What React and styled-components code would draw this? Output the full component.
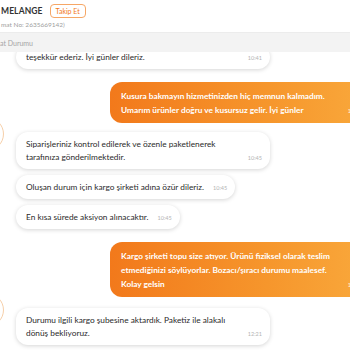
import React from "react";
import styled, { createGlobalStyle } from "styled-components";

const GlobalStyle = createGlobalStyle`
  html, body { margin: 0; padding: 0; background: #fff; }
  body { font-family: Lato, "Liberation Sans", sans-serif; }
`;

const Frame = styled.div`
  width: 350px;
  height: 350px;
  overflow: hidden;
  background: #fff;
  display: flex;
  flex-direction: column;
`;

const Header = styled.header`
  height: 33px;
  flex: none;
  box-sizing: border-box;
  border-bottom: 1px solid #ececec;
  display: flex;
  flex-direction: column;
  justify-content: center;
  gap: 3px;
  padding-left: 1px;
`;

const TitleRow = styled.div`
  display: flex;
  align-items: center;
  gap: 7px;
`;

const StoreName = styled.span`
  font-size: 8.5px;
  font-weight: 700;
  color: #333;
  letter-spacing: 0.1px;
`;

const FollowBadge = styled.span`
  box-sizing: border-box;
  height: 14px;
  padding: 0 5px;
  border: 1px solid #f6a766;
  border-radius: 4px;
  color: #f27a1a;
  font-size: 7px;
  display: inline-flex;
  align-items: center;
`;

const OrderNo = styled.div`
  font-size: 6.5px;
  color: #a0a0a0;
`;

const StatusBar = styled.div`
  height: 19px;
  flex: none;
  background: #f3f3f3;
  color: #a5a5a5;
  font-size: 7px;
  display: flex;
  align-items: center;
`;

const Messages = styled.div`
  flex: 1;
  overflow: hidden;
`;

const List = styled.div`
  margin-left: -30px;
  width: 402px;
  display: flex;
  flex-direction: column;
`;

const Group = styled.div`
  display: flex;
  align-items: flex-start;
  gap: 12px;
  margin-top: ${(p) => p.$mt || 0}px;
  padding-left: ${(p) => (p.$noAvatar ? 46 : 0)}px;
`;

const Avatar = styled.div`
  flex: none;
  width: 34px;
  height: 34px;
  box-sizing: border-box;
  margin-top: -15px;
  border-radius: 50%;
  border: 1px solid #f6cfa9;
  background: #fff;
`;

const Stack = styled.div`
  display: flex;
  flex-direction: column;
  align-items: flex-start;
  gap: 6px;
`;

const OutRow = styled.div`
  display: flex;
  justify-content: flex-end;
  margin-top: ${(p) => p.$mt || 0}px;
`;

const Bubble = styled.div`
  box-sizing: border-box;
  display: flex;
  align-items: flex-end;
  justify-content: space-between;
  gap: 9px;
  width: ${(p) => (p.$width ? `${p.$width}px` : "auto")};
  padding: 6px 8px 5px 10px;
  border-radius: 12px;
  background: #fff;
  box-shadow: 0 1px 4px rgba(0, 0, 0, 0.17);
`;

const OutBubble = styled.div`
  box-sizing: border-box;
  display: flex;
  align-items: flex-end;
  justify-content: space-between;
  width: 262px;
  padding: 7px 10px 6px 11px;
  border-radius: 12px;
  background: linear-gradient(90deg, #f2791b 0%, #f6962c 60%, #f9a93c 100%);
`;

const Text = styled.div`
  font-size: 8.3px;
  line-height: 13px;
  color: #2b2b2b;
  white-space: nowrap;
`;

const OutText = styled.div`
  font-size: 8.3px;
  line-height: 14px;
  font-weight: 700;
  color: #fff;
  white-space: nowrap;
`;

const Time = styled.span`
  flex: none;
  font-size: 5.5px;
  line-height: 12px;
  color: #b3b3b3;
`;

const OutTime = styled.span`
  flex: none;
  font-size: 5.5px;
  line-height: 12px;
  color: rgba(255, 255, 255, 0.85);
`;

const Lines = ({ lines, as: Comp }) => (
  <Comp>
    {lines.map((l, i) => (
      <React.Fragment key={i}>
        {i > 0 && <br />}
        {l}
      </React.Fragment>
    ))}
  </Comp>
);

const In = ({ lines, time, width }) => (
  <Bubble $width={width}>
    <Lines lines={lines} as={Text} />
    <Time>{time}</Time>
  </Bubble>
);

const Out = ({ lines, time, mt }) => (
  <OutRow $mt={mt}>
    <OutBubble>
      <Lines lines={lines} as={OutText} />
      <OutTime>{time}</OutTime>
    </OutBubble>
  </OutRow>
);

export default function App() {
  return (
    <>
      <GlobalStyle />
      <Frame>
        <Header>
          <TitleRow>
            <StoreName>MELANGE</StoreName>
            <FollowBadge>Takip Et</FollowBadge>
          </TitleRow>
          <OrderNo>mat No: 2635669142)</OrderNo>
        </Header>
        <StatusBar>at Durumu</StatusBar>
        <Messages>
          <List>
            <Group $noAvatar $mt={-7}>
              <Stack>
                <In width={254} lines={["teşekkür ederiz. İyi günler dileriz."]} time="10:41" />
              </Stack>
            </Group>
            <Out
              mt={13}
              lines={[
                "Kusura bakmayın hizmetinizden hiç memnun kalmadım.",
                "Umarım ürünler doğru ve kusursuz gelir. İyi günler",
              ]}
              time="10:41"
            />
            <Group $mt={9}>
              <Avatar />
              <Stack>
                <In
                  width={254}
                  lines={[
                    "Siparişleriniz kontrol edilerek ve özenle paketlenerek",
                    "tarafınıza gönderilmektedir.",
                  ]}
                  time="10:45"
                />
                <In lines={["Oluşan durum için kargo şirketi adına özür dileriz."]} time="10:45" />
                <In lines={["En kısa sürede aksiyon alınacaktır."]} time="10:45" />
              </Stack>
            </Group>
            <Out
              mt={13}
              lines={[
                "Kargo şirketi topu size atıyor. Ürünü fiziksel olarak teslim",
                "etmediğinizi söylüyorlar. Bozacı/şıracı durumu maalesef.",
                "Kolay gelsin",
              ]}
              time="10:46"
            />
            <Group $mt={11}>
              <Avatar />
              <Stack>
                <In
                  width={254}
                  lines={[
                    "Durumu ilgili kargo şubesine aktardık. Paketiz ile alakalı",
                    "dönüş bekliyoruz.",
                  ]}
                  time="12:21"
                />
              </Stack>
            </Group>
          </List>
        </Messages>
      </Frame>
    </>
  );
}
